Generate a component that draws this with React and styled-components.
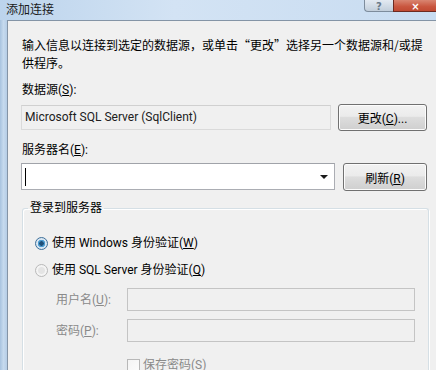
import React from "react";
import styled, { createGlobalStyle } from "styled-components";

const Global = createGlobalStyle`
  html, body { margin: 0; padding: 0; }
  body {
    width: 436px; height: 370px; overflow: hidden;
    font-family: Roboto, "Noto Sans CJK SC", sans-serif;
    font-size: 12px; color: #000;
  }
`;

const Window = styled.div`
  width: 436px; height: 370px; overflow: hidden;
  display: flex; flex-direction: column;
  background: linear-gradient(180deg, #c3d8ee 0%, #cfe0f2 30%, #c6dbf0 100%);
`;

const TitleBar = styled.div`
  height: 20px; flex: none;
  display: flex; align-items: flex-start; justify-content: space-between;
  background: linear-gradient(90deg, #bcd4ec 0%, #d3e3f4 40%, #c8dcf1 100%);
`;

const Title = styled.div`
  padding: 0 0 0 6px; line-height: 18px; font-size: 12px; color: #1a1a1a;
  font-family: "Noto Sans CJK SC", sans-serif;
`;

const Controls = styled.div`
  display: flex; margin-right: -2px;
`;

const CtlButton = styled.div`
  width: ${p => p.$w}px; height: 11px;
  border: 1px solid ${p => p.$close ? "#6d2a21" : "#7d8c9c"};
  border-top: none;
  border-radius: 0 0 ${p => p.$close ? "0 0" : "0 4px"};
  border-right: ${p => p.$close ? "1px solid #6d2a21" : "none"};
  background: ${p => p.$close
    ? "linear-gradient(180deg, #d98571 0%, #c9563f 60%, #c04a33 100%)"
    : "linear-gradient(180deg, #e3eaf2 0%, #cfd9e4 60%, #c2cedb 100%)"};
  color: ${p => p.$close ? "#fff" : "#6a7a8a"};
  font: bold 10px/8px "DejaVu Sans", sans-serif;
  display: flex; justify-content: center; align-items: flex-end;
  overflow: hidden;
`;

const Body = styled.div`
  flex: 1; display: flex; min-height: 0;
`;

const Frame = styled.div`
  width: 7px; flex: none;
  background: linear-gradient(90deg, #a8c3df 0%, #c6daee 50%, #b5cde6 100%);
`;

const Panel = styled.div`
  flex: 1; min-width: 0;
  background: #f0f0f0;
  border-top: 1px solid #8494a6;
  border-left: 1px solid #8494a6;
  padding: 15px 9px 0 13px;
  display: flex; flex-direction: column;
`;

const Intro = styled.div`
  line-height: 18px; padding-left: 1px; white-space: nowrap;
  font-family: "Noto Sans CJK SC", sans-serif;
`;

const Label = styled.div`
  line-height: 18px; padding-left: 1px;
  margin-top: ${p => p.$mt || 0}px;
  color: ${p => p.$disabled ? "#8a8a8a" : "#000"};
  u { text-decoration: underline; }
`;

const Row = styled.div`
  display: flex; align-items: ${p => p.$align || "center"};
  gap: ${p => p.$gap}px;
  margin-top: ${p => p.$mt}px;
`;

const ReadOnlyBox = styled.div`
  width: 310px; height: 25px; box-sizing: border-box;
  border: 1px solid #dadada;
  border-top-color: #d0d0d0;
  background: #f0f0f0;
  padding: 0 3px; line-height: 23px;
  color: #202020;
`;

const Button = styled.div`
  width: ${p => p.$w}px; height: ${p => p.$h}px; box-sizing: border-box;
  border: 1px solid #707070; border-radius: 3px;
  background: linear-gradient(180deg, #f2f2f2 0%, #ebebeb 45%, #dddddd 50%, #cfcfcf 100%);
  box-shadow: inset 0 0 0 1px #fcfcfc;
  display: flex; align-items: center; justify-content: center;
  color: #000;
`;

const Combo = styled.div`
  width: 314px; height: 27px; box-sizing: border-box;
  border: 1px solid #abadb3; border-top-color: #a0a3a9;
  background: #fff;
  display: flex; align-items: center; justify-content: space-between;
  padding: 0 4px 0 3px;
`;

const Caret = styled.div`
  width: 1px; height: 18px; background: #000;
`;

const Arrow = styled.div`
  width: 0; height: 0;
  border-left: 4px solid transparent; border-right: 4px solid transparent;
  border-top: 4px solid #1a1a1a;
  margin-right: 2px;
`;

const Group = styled.fieldset`
  margin: 8px -2px 0 1px; padding: 0 12px 0 12px;
  border: 1px solid #d5dfe5; border-bottom: none;
  border-radius: 3px 3px 0 0;
  box-shadow: inset 1px 1px 0 #fff, 1px 1px 0 #fff;
  min-width: 0; flex: 1;
`;

const Legend = styled.legend`
  margin-left: -7px; padding: 0 2px; line-height: 18px;
`;

const RadioRow = styled.label`
  display: flex; align-items: center; gap: 4px; line-height: 18px;
  margin-top: ${p => p.$mt}px;
  color: #000;
`;

const Radio = styled.span`
  width: 13px; height: 13px; box-sizing: border-box; border-radius: 50%;
  border: 1px solid ${p => p.$checked ? "#3d6f99" : "#b9b9b9"};
  background: ${p => p.$checked
    ? "radial-gradient(circle at 50% 50%, #1f4f78 0 2px, #4a9bd0 2.5px 3.5px, #d8e6f2 4px)"
    : "radial-gradient(circle at 50% 50%, #e4e4e4 0 3px, #f4f4f4 4px)"};
  flex: none;
`;

const CredGrid = styled.div`
  display: grid; grid-template-columns: 72px 288px;
  row-gap: 8px; align-items: center;
  padding-left: 20px; margin-top: 9px;
`;

const DisabledBox = styled.div`
  height: 23px; box-sizing: border-box;
  border: 1px solid #c4c4c4; background: #f0f0f0;
`;

const CheckRow = styled.div`
  display: flex; align-items: center; gap: 3px;
  margin: 14px 0 0 92px; line-height: 18px; color: #8a8a8a;
`;

const Check = styled.span`
  width: 13px; height: 13px; box-sizing: border-box;
  border: 1px solid #b8b8b8;
  background: linear-gradient(135deg, #f4f4f4, #fcfcfc);
  flex: none;
`;

export default function App() {
  return (
    <Window>
      <Global />
      <TitleBar>
        <Title>添加连接</Title>
        <Controls>
          <CtlButton $w={28}>?</CtlButton>
          <CtlButton $w={43} $close>×</CtlButton>
        </Controls>
      </TitleBar>
      <Body>
        <Frame />
        <Panel>
          <Intro>
            输入信息以连接到选定的数据源，或单击“更改”选择另一个数据源和/或提
            <br />
            供程序。
          </Intro>
          <Label $mt={9}>数据源(<u>S</u>):</Label>
          <Row $gap={7} $mt={5}>
            <ReadOnlyBox>Microsoft SQL Server (SqlClient)</ReadOnlyBox>
            <Button $w={89} $h={27}><span>更改(<u>C</u>)...</span></Button>
          </Row>
          <Label $mt={10}>服务器名(<u>E</u>):</Label>
          <Row $gap={8} $mt={4} $align="flex-start">
            <Combo>
              <Caret />
              <Arrow />
            </Combo>
            <Button $w={84} $h={28}><span>刷新(<u>R</u>)</span></Button>
          </Row>
          <Group>
            <Legend>登录到服务器</Legend>
            <RadioRow $mt={17}>
              <Radio $checked />
              <span>使用 Windows 身份验证(<u>W</u>)</span>
            </RadioRow>
            <RadioRow $mt={9}>
              <Radio />
              <span>使用 SQL Server 身份验证(<u>Q</u>)</span>
            </RadioRow>
            <CredGrid>
              <Label $disabled>用户名(<u>U</u>):</Label>
              <DisabledBox />
              <Label $disabled>密码(<u>P</u>):</Label>
              <DisabledBox />
            </CredGrid>
            <CheckRow>
              <Check />
              <span>保存密码(S)</span>
            </CheckRow>
          </Group>
        </Panel>
      </Body>
    </Window>
  );
}
